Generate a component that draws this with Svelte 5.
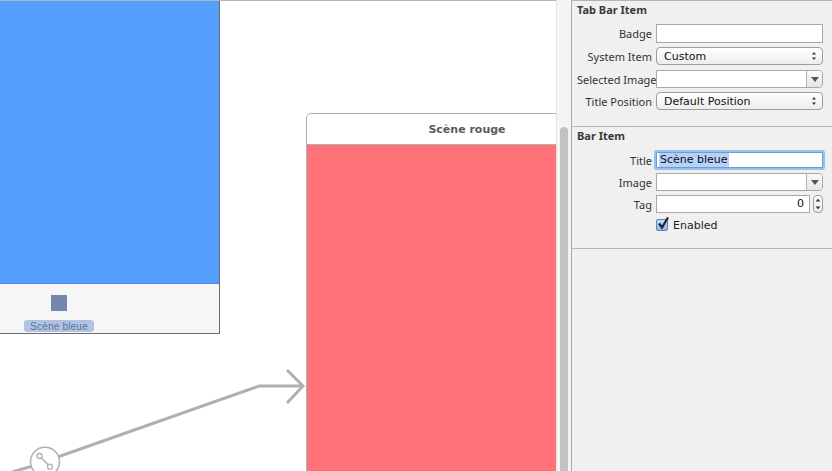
<script>
  const ARROWS = 'M3 3.5 L5 1 L7 3.5 Z M3 6.5 L5 9 L7 6.5 Z';
</script>

{#snippet updown()}
  <svg class="arrows" viewBox="0 0 10 10" width="10" height="10"><path d={ARROWS} fill="#333" /></svg>
{/snippet}

{#snippet combo()}
  <div class="combo">
    <div class="combo-field"></div>
    <div class="combo-btn">
      <svg viewBox="0 0 8 5" width="8" height="5"><path d="M0 0 L8 0 L4 5 Z" fill="#555" /></svg>
    </div>
  </div>
{/snippet}

<div class="page">
  <div class="canvas">
    <div class="scene-blue">
      <div class="blue-view"></div>
      <div class="tabbar">
        <div class="tab-item">
          <div class="tab-icon"></div>
          <div class="tab-label">Scène bleue</div>
        </div>
      </div>
    </div>

    <div class="scene-red">
      <div class="scene-title">Scène rouge</div>
      <div class="red-view"></div>
    </div>

    <svg class="segue" width="310" height="110" viewBox="0 0 310 110">
      <path d="M12 110 L33 104 M59 94.500 L259 24 L303 24 M287 8 L303 24 L287 41" fill="none" stroke="#b0b0b0" stroke-width="3" />
      <circle cx="45" cy="99.700" r="14.500" fill="#fff" stroke="#b0b0b0" stroke-width="1.500" />
      <circle cx="39.500" cy="94" r="2.500" fill="none" stroke="#b0b0b0" stroke-width="1.300" />
      <circle cx="50" cy="104.700" r="2.500" fill="none" stroke="#b0b0b0" stroke-width="1.300" />
      <path d="M41.500 96 L48 102.700" stroke="#b0b0b0" stroke-width="1.500" />
    </svg>
  </div>

  <div class="scrolltrack"><div class="thumb"></div></div>

  <div class="inspector">
    <section class="tab-section">
      <h3>Tab Bar Item</h3>
      <div class="row first">
        <span class="lbl">Badge</span>
        <div class="field badge"></div>
      </div>
      <div class="row">
        <span class="lbl">System Item</span>
        <div class="select"><span>Custom</span>{@render updown()}</div>
      </div>
      <div class="row loose">
        <span class="lbl">Selected Image</span>
        {@render combo()}
      </div>
      <div class="row">
        <span class="lbl">Title Position</span>
        <div class="select"><span>Default Position</span>{@render updown()}</div>
      </div>
    </section>

    <section class="bar-section">
      <h3>Bar Item</h3>
      <div class="row first">
        <span class="lbl">Title</span>
        <div class="field focused"><span class="sel">Scène bleue</span></div>
      </div>
      <div class="row">
        <span class="lbl">Image</span>
        {@render combo()}
      </div>
      <div class="row">
        <span class="lbl">Tag</span>
        <div class="field tag">0</div>
        <div class="stepper">
          <svg viewBox="0 0 10 16" width="8" height="14"><path d="M2 5 L5 1.500 L8 5 Z M2 11 L5 14.500 L8 11 Z" fill="#333" /></svg>
        </div>
      </div>
      <div class="check-row">
        <div class="checkbox">
          <svg viewBox="0 0 14 14" width="14" height="14"><path d="M3 6.500 L6 10.500 L12 0.500" fill="none" stroke="#16233a" stroke-width="2.200" /></svg>
        </div>
        <span>Enabled</span>
      </div>
    </section>
  </div>
</div>

<style>
  :global(body) {
    margin: 0;
    overflow: hidden;
    background: #fff;
  }

  .page {
    display: flex;
    width: 832px;
    height: 471px;
    overflow: hidden;
    font-family: "DejaVu Sans", sans-serif;
    font-size: 11px;
    color: #2c2c2c;
  }

  .canvas {
    position: relative;
    width: 556px;
    flex: none;
    background: #fff;
    border-top: 1px solid #b4b4b4;
    box-sizing: border-box;
    overflow: hidden;
  }

  .scene-blue {
    position: absolute;
    left: 0;
    top: -1px;
    width: 220px;
    height: 334px;
    box-sizing: border-box;
    border-right: 1px solid #6c6c6c;
    border-bottom: 1px solid #6c6c6c;
    display: flex;
    flex-direction: column;
  }

  .blue-view {
    height: 284px;
    background: #55a0ff;
    border-bottom: 1px solid #4a8ddf;
    box-sizing: border-box;
    flex: none;
  }

  .tabbar {
    flex: 1;
    background: #f6f6f6;
  }

  .tab-item {
    width: 118px;
    display: flex;
    flex-direction: column;
    align-items: center;
    padding-top: 11px;
  }

  .tab-icon {
    width: 16px;
    height: 16px;
    background: #7387ab;
    flex: none;
  }

  .tab-label {
    margin-top: 9px;
    width: 70px;
    height: 12px;
    line-height: 13px;
    background: #b1c3e4;
    border-radius: 3px;
    text-align: center;
    font-family: "Liberation Sans", sans-serif;
    font-size: 10px;
    letter-spacing: 0.2px;
    color: #5f7398;
  }

  .scene-red {
    position: absolute;
    left: 306px;
    top: 112px;
    width: 330px;
    height: 360px;
    box-sizing: border-box;
    border: 1px solid #b0b0b0;
    border-radius: 5px 0 0 0;
    background: #fff;
  }

  .scene-title {
    width: 320px;
    height: 30px;
    line-height: 31px;
    text-align: center;
    font-weight: bold;
    font-size: 11px;
    color: #5c5c5c;
    border-bottom: 1px solid #b0b0b0;
  }

  .red-view {
    height: 340px;
    background: #ff7279;
  }

  .segue {
    position: absolute;
    left: 0;
    top: 361px;
  }

  .scrolltrack {
    position: relative;
    width: 14px;
    flex: none;
    background: #f4f4f4;
    border-left: 1px solid #e6e6e6;
    border-right: 1px solid #a8a8a8;
  }

  .thumb {
    position: absolute;
    left: 3px;
    top: 127px;
    width: 8px;
    height: 360px;
    border-radius: 4px;
    background: #c2c2c2;
  }

  .inspector {
    flex: 1;
    background: #f0f0f0;
    border-top: 1px solid #b4b4b4;
    box-sizing: border-box;
  }

  section {
    box-sizing: border-box;
    border-bottom: 1px solid #b8b8b8;
    padding: 3px 9px 0 5px;
  }

  .tab-section {
    height: 126px;
  }

  .bar-section {
    height: 122px;
  }

  h3 {
    margin: 0;
    font-family: "Noto Sans", sans-serif;
    font-size: 11px;
    line-height: 12px;
    font-weight: bold;
    color: #3a3a3a;
  }

  .row {
    display: flex;
    align-items: center;
    gap: 4px;
    margin-top: 4px;
    min-height: 18px;
  }

  .row.first {
    margin-top: 8px;
  }

  .row.loose {
    margin-top: 5px;
  }

  .bar-section .row.first {
    margin-top: 9px;
  }

  .lbl {
    width: 75px;
    flex: none;
    text-align: right;
    white-space: nowrap;
    font-family: "Noto Sans", sans-serif;
    font-size: 11px;
    color: #333;
  }

  .field {
    flex: 1;
    height: 18px;
    box-sizing: border-box;
    background: #fff;
    border: 1px solid #a8a8a8;
    line-height: 15px;
    padding: 0 3px;
    color: #111;
  }

  .field.badge {
    height: 19px;
  }

  .field.focused {
    border: 1px solid #6c9cd8;
    box-shadow: 0 0 0 2px #9cc0ea;
    border-radius: 1px;
    height: 16px;
    line-height: 14px;
  }

  .sel {
    background: #b5d2fb;
    display: inline-block;
    height: 14px;
    padding: 0 1px;
    margin-left: -1px;
  }

  .field.tag {
    text-align: right;
    line-height: 16px;
    padding-right: 5px;
    color: #111;
  }

  .select {
    flex: 1;
    height: 18px;
    box-sizing: border-box;
    display: flex;
    align-items: center;
    justify-content: space-between;
    padding: 0 3px 0 7px;
    border: 1px solid #9e9e9e;
    border-radius: 4px;
    background: linear-gradient(#fff, #ededed);
    color: #111;
  }

  .combo {
    flex: 1;
    height: 18px;
    display: flex;
    box-sizing: border-box;
    border: 1px solid #a8a8a8;
    border-radius: 0 4px 4px 0;
    overflow: hidden;
  }

  .combo-field {
    flex: 1;
    background: #fff;
    border-right: 1px solid #b4b4b4;
  }

  .combo-btn {
    width: 15px;
    display: flex;
    align-items: center;
    justify-content: center;
    background: linear-gradient(#fafafa, #e6e6e6);
  }

  .stepper {
    width: 10px;
    height: 18px;
    margin-left: -1px;
    box-sizing: border-box;
    flex: none;
    border: 1px solid #9e9e9e;
    border-radius: 4px;
    background: linear-gradient(#fff, #e9e9e9);
    display: flex;
    align-items: center;
    justify-content: center;
  }

  .check-row {
    display: flex;
    align-items: center;
    gap: 5px;
    margin-top: 4px;
    margin-left: 79px;
    height: 16px;
    color: #222;
  }

  .checkbox {
    width: 12px;
    height: 12px;
    box-sizing: border-box;
    border: 1px solid #5f84b8;
    border-radius: 2px;
    background: linear-gradient(#c8dcf4, #8fb5e4);
    display: flex;
  }

  .checkbox svg {
    flex: none;
    margin: -3px 0 0 -1px;
  }
</style>
